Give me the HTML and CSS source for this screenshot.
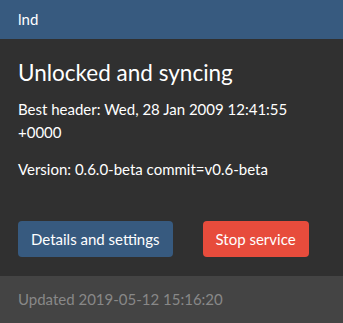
FILE: index.html
```html
<!DOCTYPE html>
<html lang="en">
<head>
    <meta charset="UTF-8">
    <meta name="viewport" content="width=device-width, initial-scale=1.0">
    <title>lnd</title>
    <link rel="stylesheet" href="styles.css">
</head>
<body>
    <div class="card">
        <div class="card-header">lnd</div>

        <div class="card-body">
            <h2 class="card-title">Unlocked and syncing</h2>
            <p>Best header: Wed, 28 Jan 2009 12:41:55 +0000</p>
            <p>Version: 0.6.0-beta commit=v0.6-beta</p>

            <div class="actions">
                <button class="btn btn-primary">Details and settings</button>
                <button class="btn btn-danger">Stop service</button>
            </div>
        </div>

        <div class="card-footer">Updated 2019-05-12 15:16:20</div>
    </div>
</body>
</html>
```

FILE: styles.css
```css
html, body {
    height: 100%;
}
body {
    margin: 0;
    font-family: Lato, 'Noto Sans', sans-serif;
    font-size: 15px;
    line-height: 1.5;
    color: #fff;
    background: #303030;
}
.card {
    display: flex;
    flex-direction: column;
    min-height: 100%;
}
.card-header {
    background: #375a7f;
    padding: 8px 18px 8.5px;
    font-size: 15px;
    line-height: 22.5px;
}
.card-body {
    padding: 20px 18px 19px;
    background: #303030;
}
.card-title {
    margin: 0 0 12px;
    font-size: 22.5px;
    font-weight: 400;
    line-height: 1.2;
}
p {
    margin: 0 0 15px;
}
.actions {
    display: flex;
    gap: 30px;
    margin-top: 40px;
}
.btn {
    font-family: inherit;
    font-size: 15px;
    line-height: 22.5px;
    padding: 7px 13px;
    border: none;
    border-radius: 4px;
    color: #fff;
    cursor: pointer;
}
.btn-primary {
    background: #375a7f;
}
.btn-danger {
    background: #e74c3c;
}
.card-footer {
    flex: 1;
    background: #444;
    color: #888;
    padding: 12px 18px;
}
```
